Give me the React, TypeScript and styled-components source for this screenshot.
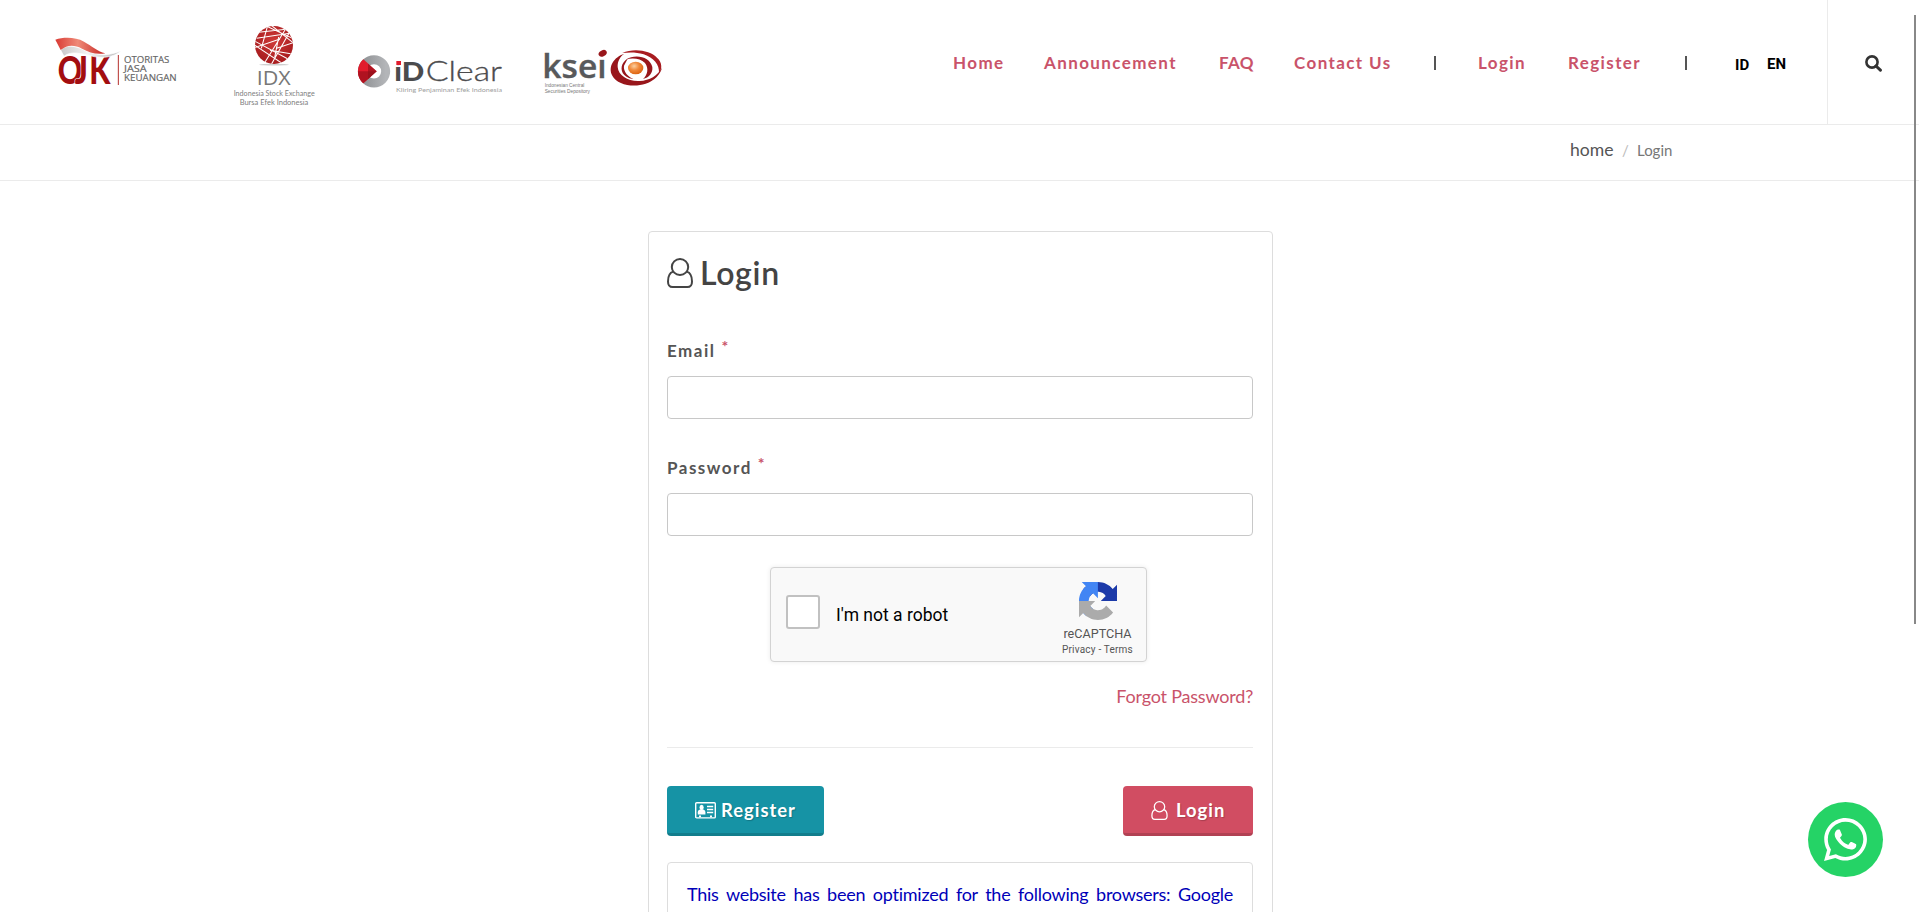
import React from "react";
import styled, { createGlobalStyle } from "styled-components";
import { FaWhatsapp } from "react-icons/fa";

const GlobalStyle = createGlobalStyle`
  *, *::before, *::after { box-sizing: border-box; }
  html, body { margin: 0; height: 100%; overflow: hidden; background: #fff; }
  body { font-family: Lato, "Liberation Sans", sans-serif; color: #555; }
  a { color: inherit; text-decoration: none; }
`;

const accent = "#c9536a";

const Page = styled.div`
  position: relative;
  height: 912px;
  overflow: hidden;
  background: #fff;
`;

const Header = styled.header`
  display: flex;
  height: 125px;
  border-bottom: 1px solid #ebebeb;
`;

const Logos = styled.div`
  display: flex;
  align-items: flex-start;
  flex: 1;
  padding-left: 50px;
`;

const Logo = styled.svg<{ $top: number; $gap: number }>`
  display: block;
  flex: none;
  overflow: visible;
  margin-top: ${(p) => p.$top}px;
  margin-right: ${(p) => p.$gap}px;
`;

const Nav = styled.nav`
  display: flex;
  flex: none;
  padding-top: 50px;
`;

const NavItem = styled.a<{ $w: number; $ls?: number }>`
  flex: none;
  width: ${(p) => p.$w}px;
  padding-top: 1px;
  font-size: 17px;
  line-height: 24px;
  font-weight: 700;
  letter-spacing: ${(p) => p.$ls ?? 1.4}px;
  color: ${accent};
  white-space: nowrap;
`;

const NavBar = styled.span<{ $w: number }>`
  flex: none;
  width: ${(p) => p.$w}px;

  &::before {
    content: "";
    display: block;
    width: 2px;
    height: 14px;
    margin-top: 6px;
    background: #555;
  }
`;

const Lang = styled.a<{ $w: number; $top: number }>`
  flex: none;
  width: ${(p) => p.$w}px;
  margin-top: ${(p) => p.$top}px;
  font: 700 15px/24px Roboto, "Liberation Sans", sans-serif;
  color: #000;
`;

const SearchBox = styled.div`
  flex: none;
  width: 92px;
  border-left: 1px solid #ebebeb;
  padding: 55px 0 0 37px;

  svg { display: block; }
`;

const Crumbs = styled.div`
  display: flex;
  align-items: baseline;
  height: 56px;
  padding: 13px 0 0 1570px;
  border-bottom: 1px solid #ebebeb;
  line-height: 24px;
`;

const CrumbHome = styled.a`
  width: 52px;
  font-size: 17.6px;
  color: #555;
`;

const CrumbSlash = styled.span`
  width: 15px;
  font-size: 15px;
  color: #bbb;
`;

const CrumbCurrent = styled.span`
  font-size: 15px;
  color: #777;
`;

const Card = styled.main`
  width: 625px;
  height: 720px;
  margin: 50px 0 0 648px;
  padding: 0 19px 0 18px;
  border: 1px solid #ddd;
  border-radius: 4px;
`;

const Title = styled.h1`
  display: flex;
  gap: 7px;
  height: 113px;
  margin: 0;
  padding-top: 26px;
  font-size: 32px;
  line-height: 30px;
  font-weight: 600;
  color: #444;

  span { letter-spacing: 0.7px; }
`;

const FieldStack = styled.div`
  display: grid;
  grid-auto-rows: 117px;
`;

const Field = styled.label`
  display: block;
`;

const FieldName = styled.span`
  display: flex;
  gap: 6px;
  height: 36px;
  margin-top: -5px;
  font-size: 17px;
  line-height: 22px;
  font-weight: 700;
  letter-spacing: 1.5px;
  color: #555;

  em {
    margin-top: -3px;
    font-style: normal;
    font-size: 16px;
    line-height: 18px;
    letter-spacing: 0;
    color: ${accent};
  }
`;

const Input = styled.input`
  display: block;
  width: 586px;
  height: 43px;
  padding: 8px 14px;
  border: 1px solid #c8c8c8;
  border-radius: 4px;
  background: #fff;
  outline: none;
`;

const Captcha = styled.div`
  display: flex;
  width: 377px;
  height: 95px;
  margin: -12px 0 0 103px;
  border: 1px solid #d3d3d3;
  border-radius: 4px;
  background: #f9f9f9;
  box-shadow: 0 0 5px rgba(0, 0, 0, 0.08);
  font-family: Roboto, "Liberation Sans", sans-serif;
`;

const CheckBox = styled.span`
  width: 34px;
  height: 34px;
  margin: 27px 16px 0 15px;
  border: 2px solid #c1c1c1;
  border-radius: 3px;
  background: #fff;
`;

const CaptchaText = styled.span`
  flex: 1;
  padding-top: 35px;
  font-size: 17.5px;
  line-height: 24px;
  color: #000;
`;

const CaptchaBrand = styled.div`
  display: flex;
  flex-direction: column;
  align-items: center;
  width: 98px;
  padding: 14px 0 0 1px;
  color: #555;

  svg { display: block; }
  b { font-weight: 400; font-size: 12.6px; line-height: 16px; margin-top: 6px; }
  small { font-size: 10px; line-height: 12px; margin-top: 2px; letter-spacing: 0.2px; white-space: nowrap; }
`;

const Forgot = styled.a`
  display: block;
  margin-top: 20px;
  font-size: 18px;
  line-height: 28px;
  letter-spacing: -0.2px;
  text-align: right;
  color: ${accent};
`;

const Rule = styled.hr`
  height: 1px;
  margin: 37px 0 38px;
  border: 0;
  background: #ebebeb;
`;

const Actions = styled.div`
  display: flex;
  justify-content: space-between;
`;

const Button = styled.button<{ $bg: string; $w: number; $gap: number }>`
  display: flex;
  align-items: center;
  gap: ${(p) => p.$gap}px;
  width: ${(p) => p.$w}px;
  height: 50px;
  padding: 0 0 0 28px;
  border: 0;
  border-bottom: 3px solid rgba(0, 0, 0, 0.15);
  border-radius: 4px;
  background: ${(p) => p.$bg};
  color: #fff;
  font: 700 18.4px/24px Lato, sans-serif;
  letter-spacing: 1px;
  text-shadow: 1px 1px 1px rgba(0, 0, 0, 0.2);

  svg { margin-top: 2px; }
`;

const Notice = styled.p`
  height: 120px;
  margin: 26px 0 0;
  padding: 17px 19px 0 19px;
  border: 1px solid #ddd;
  border-radius: 4px;
  font-size: 18px;
  line-height: 28px;
  letter-spacing: -0.25px;
  text-align: justify;
  text-align-last: justify;
  color: #0000b8;
`;

const Chat = styled.a`
  position: absolute;
  left: 1808px;
  top: 802px;
  display: flex;
  align-items: center;
  justify-content: center;
  width: 75px;
  height: 75px;
  border-radius: 50%;
  background: #25d366;
  color: #fff;
`;

const ScrollThumb = styled.div`
  position: absolute;
  left: 1914px;
  top: 15px;
  width: 2px;
  height: 609px;
  background: #888;
`;

const UserIcon = ({ w, h, stroke }: { w: number; h: number; stroke: number }) => (
  <svg width={w} height={h} viewBox="0 0 26 30" fill="none" stroke="currentColor" strokeWidth={stroke} strokeLinejoin="round">
    <ellipse cx="13" cy="9" rx="8.2" ry="8" />
    <path d="M6.2 13.6C3 14.6 1 18.6 1 23.4C1 27 2.8 29 5.6 29H20.4C23.2 29 25 27 25 23.4C25 18.6 23 14.6 19.8 13.6" />
  </svg>
);

const CardIcon = () => (
  <svg width="21" height="17" viewBox="0 0 21 17" fill="none" stroke="#fff">
    <rect x="0.7" y="0.7" width="19.6" height="15.2" rx="1" strokeWidth="1.4" />
    <ellipse cx="6.6" cy="5.4" rx="2.1" ry="2.6" fill="#fff" stroke="none" />
    <path d="M2.8 12.4V10.2C2.8 8.6 4.2 7.5 5.2 7.5H8C9 7.5 10.4 8.6 10.4 10.2V12.4Z" fill="#fff" stroke="none" />
    <path d="M12 4.5H18.2M12 7.5H18.2M12 10.5H18.2" strokeWidth="1.3" />
    <path d="M4 14.4H6M15 14.4H17" strokeWidth="1.6" />
  </svg>
);

const OjkLogo = () => (
  <Logo $top={35} $gap={50} width="130" height="55" viewBox="30 60 390 165">
    <defs>
      <linearGradient id="flag" x1="0" x2="1">
        <stop offset="0" stopColor="#d93a34" />
        <stop offset="0.45" stopColor="#ef8a78" />
        <stop offset="1" stopColor="#c5221f" />
      </linearGradient>
      <linearGradient id="silver" x1="0" x2="1">
        <stop offset="0" stopColor="#c9c9c9" />
        <stop offset="0.45" stopColor="#f4f4f4" />
        <stop offset="1" stopColor="#b5b5b5" />
      </linearGradient>
    </defs>
    <text transform="scale(0.8 1)" x="67 130 185" y="207" fontFamily="Lato" fontWeight="900" fontSize="114" fill="#a30d10" stroke="#fff" strokeWidth="4" paintOrder="stroke">OJK</text>
    <path d="M62 105C85 84 112 96 140 108C172 121 205 124 242 108C222 126 190 131 158 124C126 116 92 106 72 124Z" fill="url(#silver)" stroke="#fff" strokeWidth="2" />
    <path d="M46 74C72 66 106 66 132 80C156 93 170 108 196 115C168 120 148 112 126 101C100 88 82 90 62 105Z" fill="url(#flag)" />
    <path d="M235 120V210" stroke="#b5302c" strokeWidth="3" />
    <g fontFamily="Open Sans" fontSize="28" fill="#666" stroke="#666" strokeWidth="0.5">
      <text x="252" y="143" textLength="136" lengthAdjust="spacingAndGlyphs">OTORITAS</text>
      <text x="252" y="171" textLength="68" lengthAdjust="spacingAndGlyphs">JASA</text>
      <text x="252" y="199" textLength="158" lengthAdjust="spacingAndGlyphs">KEUANGAN</text>
    </g>
  </Logo>
);

const IdxLogo = () => (
  <Logo $top={23} $gap={35} width="90" height="85" viewBox="570 24 270 255">
    <defs>
      <radialGradient id="globe" cx="0.5" cy="0.4" r="0.65">
        <stop offset="0" stopColor="#cf3a38" />
        <stop offset="1" stopColor="#a3191c" />
      </radialGradient>
      <clipPath id="globeClip"><circle cx="702" cy="90" r="57" /></clipPath>
    </defs>
    <ellipse cx="702" cy="149" rx="44" ry="2.5" fill="#cfcfcf" />
    <circle cx="702" cy="90" r="57" fill="url(#globe)" />
    <g clipPath="url(#globeClip)" stroke="#fff" strokeWidth="3.2" fill="none">
      <path d="M656 52L762 40M650 70L766 52M643 98L720 72M672 30L762 72M690 28L768 90M640 76L744 132M640 88L728 146" />
      <path d="M684 28L664 100M742 34L672 146M754 42L694 148M768 80L710 100M716 66L704 128M690 106L752 116" />
    </g>
    <text x="650" y="209" fontFamily="Open Sans" fontSize="60" textLength="102" lengthAdjust="spacingAndGlyphs" fill="#777">IDX</text>
    <g fontFamily="Lato" fontSize="20" fill="#808080">
      <text x="581" y="242" textLength="243" lengthAdjust="spacingAndGlyphs">Indonesia Stock Exchange</text>
      <text x="599" y="269" textLength="206" lengthAdjust="spacingAndGlyphs">Bursa Efek Indonesia</text>
    </g>
  </Logo>
);

const ClearLogo = () => (
  <Logo $top={50} $gap={30} width="155" height="50" viewBox="45 45 465 150">
    <defs>
      <linearGradient id="ring" x1="0" x2="1">
        <stop offset="0" stopColor="#8f9194" />
        <stop offset="1" stopColor="#b3b5b8" />
      </linearGradient>
    </defs>
    <circle cx="102" cy="109" r="35" fill="none" stroke="url(#ring)" strokeWidth="27" />
    <path d="M70 73A48 48 0 0 0 70 145L110 109Z" fill="#e11b2c" />
    <path d="M54 109H110L70 145A48 48 0 0 1 54 109Z" fill="#b01220" />
    <path d="M84 86L110 109L84 132Z" fill="#8e0f19" opacity="0.6" />
    <text x="163" y="137" fontFamily="Lato" fontWeight="900" fontSize="80" textLength="90" lengthAdjust="spacingAndGlyphs" fill="#4b4b4d">iD</text>
    <rect x="164" y="70" width="22" height="22" fill="#fff" />
    <rect x="169" y="78" width="14" height="12" fill="#e11b2c" />
    <text x="257" y="137" fontFamily="Lato" fontWeight="300" fontSize="84" textLength="229" lengthAdjust="spacingAndGlyphs" fill="#4b4b4d" stroke="#4b4b4d" strokeWidth="1">Clear</text>
    <text x="168" y="172" fontFamily="Lato" fontSize="18" textLength="318" lengthAdjust="spacingAndGlyphs" fill="#a0a0a0">Kliring Penjaminan Efek Indonesia</text>
  </Logo>
);

const KseiLogo = () => (
  <Logo $top={47} $gap={0} width="130" height="53" viewBox="600 36 390 159">
    <defs>
      <radialGradient id="orb" cx="0.4" cy="0.35" r="0.65">
        <stop offset="0" stopColor="#fbd0a0" />
        <stop offset="0.5" stopColor="#f08a3c" />
        <stop offset="1" stopColor="#dd6412" />
      </radialGradient>
    </defs>
    <text x="607" y="130" fontFamily="Open Sans" fontWeight="600" fontSize="98" textLength="193" lengthAdjust="spacingAndGlyphs" fill="#58595b" stroke="#58595b" strokeWidth="1">ksei</text>
    <rect x="772" y="44" width="29" height="29" fill="#fff" />
    <ellipse cx="788" cy="55" rx="13" ry="9" transform="rotate(-28 788 55)" fill="#98161b" />
    <g transform="translate(781 30)">
      <path d="M72 26C40 36 22 66 36 92C50 120 100 128 136 116C164 106 180 88 185 68C172 92 148 106 118 108C84 110 54 92 52 66C51 48 60 34 72 26Z" fill="#98161b" />
      <path d="M66 24C100 8 150 16 170 38C186 52 186 72 176 84C178 60 160 38 130 28C108 21 86 22 66 24Z" fill="#a81c20" />
      <path d="M76 44C106 24 150 36 156 66C158 84 146 98 128 102C142 90 146 70 134 54C120 40 96 38 76 44Z" fill="#98161b" />
      <path d="M82 41C62 52 58 76 72 90C80 98 92 102 100 102C84 96 68 80 71 62Z" fill="#98161b" />
      <ellipse cx="106" cy="69" rx="23" ry="19" fill="url(#orb)" />
    </g>
    <g fontFamily="Liberation Sans" fontSize="15" fill="#777">
      <text x="614" y="155" textLength="119" lengthAdjust="spacingAndGlyphs">Indonesian Central</text>
      <text x="614" y="173" textLength="136" lengthAdjust="spacingAndGlyphs">Securities Depository</text>
    </g>
  </Logo>
);

const CaptchaIcon = () => (
  <svg width="38" height="38" viewBox="0 0 64 64">
    <path fill="#1c3aa9" d="M64 31.955l-.033-1.370V4.687l-7.160 7.160C50.948 4.674 42.033.093 32.050.093c-10.400 0-19.622 4.960-25.458 12.640l11.736 11.860a15.550 15.550 0 0 1 4.754-5.334c2.050-1.600 4.952-2.906 8.968-2.906.485 0 .860.057 1.135.163 4.976.393 9.288 3.140 11.828 7.124l-8.307 8.307L64 31.953" />
    <path fill="#4285f4" d="M31.862.094l-1.370.033H4.594l7.160 7.160C4.580 13.147 0 22.060 0 32.046c0 10.400 4.960 19.622 12.640 25.458L24.500 45.768a15.550 15.550 0 0 1-5.334-4.754c-1.600-2.050-2.906-4.952-2.906-8.968 0-.485.057-.860.163-1.135.393-4.976 3.140-9.288 7.124-11.828l8.307 8.307L31.860.095" />
    <path fill="#ababab" d="M.001 32.045l.033 1.370v25.898l7.160-7.160c5.860 7.173 14.774 11.754 24.760 11.754 10.400 0 19.622-4.960 25.458-12.640l-11.736-11.860a15.550 15.550 0 0 1-4.754 5.334c-2.050 1.600-4.952 2.906-8.968 2.906-.485 0-.860-.057-1.135-.163-4.976-.393-9.288-3.140-11.828-7.124l8.307-8.307c-10.522.040-22.400.066-27.295-.005" />
  </svg>
);

export default function App() {
  return (
    <Page>
      <GlobalStyle />
      <Header>
        <Logos>
          <OjkLogo />
          <IdxLogo />
          <ClearLogo />
          <KseiLogo />
        </Logos>
        <Nav>
          <NavItem $w={91}>Home</NavItem>
          <NavItem $w={175}>Announcement</NavItem>
          <NavItem $w={75} $ls={0.3}>FAQ</NavItem>
          <NavItem $w={140}>Contact Us</NavItem>
          <NavBar $w={44} />
          <NavItem $w={90}>Login</NavItem>
          <NavItem $w={117}>Register</NavItem>
          <NavBar $w={50} />
          <Lang $w={32} $top={3}>ID</Lang>
          <Lang $w={60} $top={2}>EN</Lang>
        </Nav>
        <SearchBox>
          <svg width="17" height="17" viewBox="0 0 17 17" fill="none" stroke="#333" strokeWidth="2.6">
            <circle cx="7" cy="7" r="5.6" />
            <path d="M11 11L15.4 15.2" strokeWidth="3" strokeLinecap="round" />
          </svg>
        </SearchBox>
      </Header>
      <Crumbs>
        <CrumbHome>home</CrumbHome>
        <CrumbSlash>/</CrumbSlash>
        <CrumbCurrent>Login</CrumbCurrent>
      </Crumbs>
      <Card>
        <Title>
          <UserIcon w={26} h={30} stroke={2} />
          <span>Login</span>
        </Title>
        <FieldStack>
          <Field>
            <FieldName>Email <em>*</em></FieldName>
            <Input type="email" />
          </Field>
          <Field>
            <FieldName>Password <em>*</em></FieldName>
            <Input type="password" />
          </Field>
        </FieldStack>
        <Captcha>
          <CheckBox />
          <CaptchaText>I'm not a robot</CaptchaText>
          <CaptchaBrand>
            <CaptchaIcon />
            <b>reCAPTCHA</b>
            <small>Privacy - Terms</small>
          </CaptchaBrand>
        </Captcha>
        <Forgot>Forgot Password?</Forgot>
        <Rule />
        <Actions>
          <Button $bg="#1693a5" $w={157} $gap={5}>
            <CardIcon />
            Register
          </Button>
          <Button $bg="#d14d62" $w={130} $gap={8}>
            <UserIcon w={17} h={19} stroke={2} />
            Login
          </Button>
        </Actions>
        <Notice>This website has been optimized for the following browsers: Google</Notice>
      </Card>
      <Chat>
        <FaWhatsapp size={49} />
      </Chat>
      <ScrollThumb />
    </Page>
  );
}
